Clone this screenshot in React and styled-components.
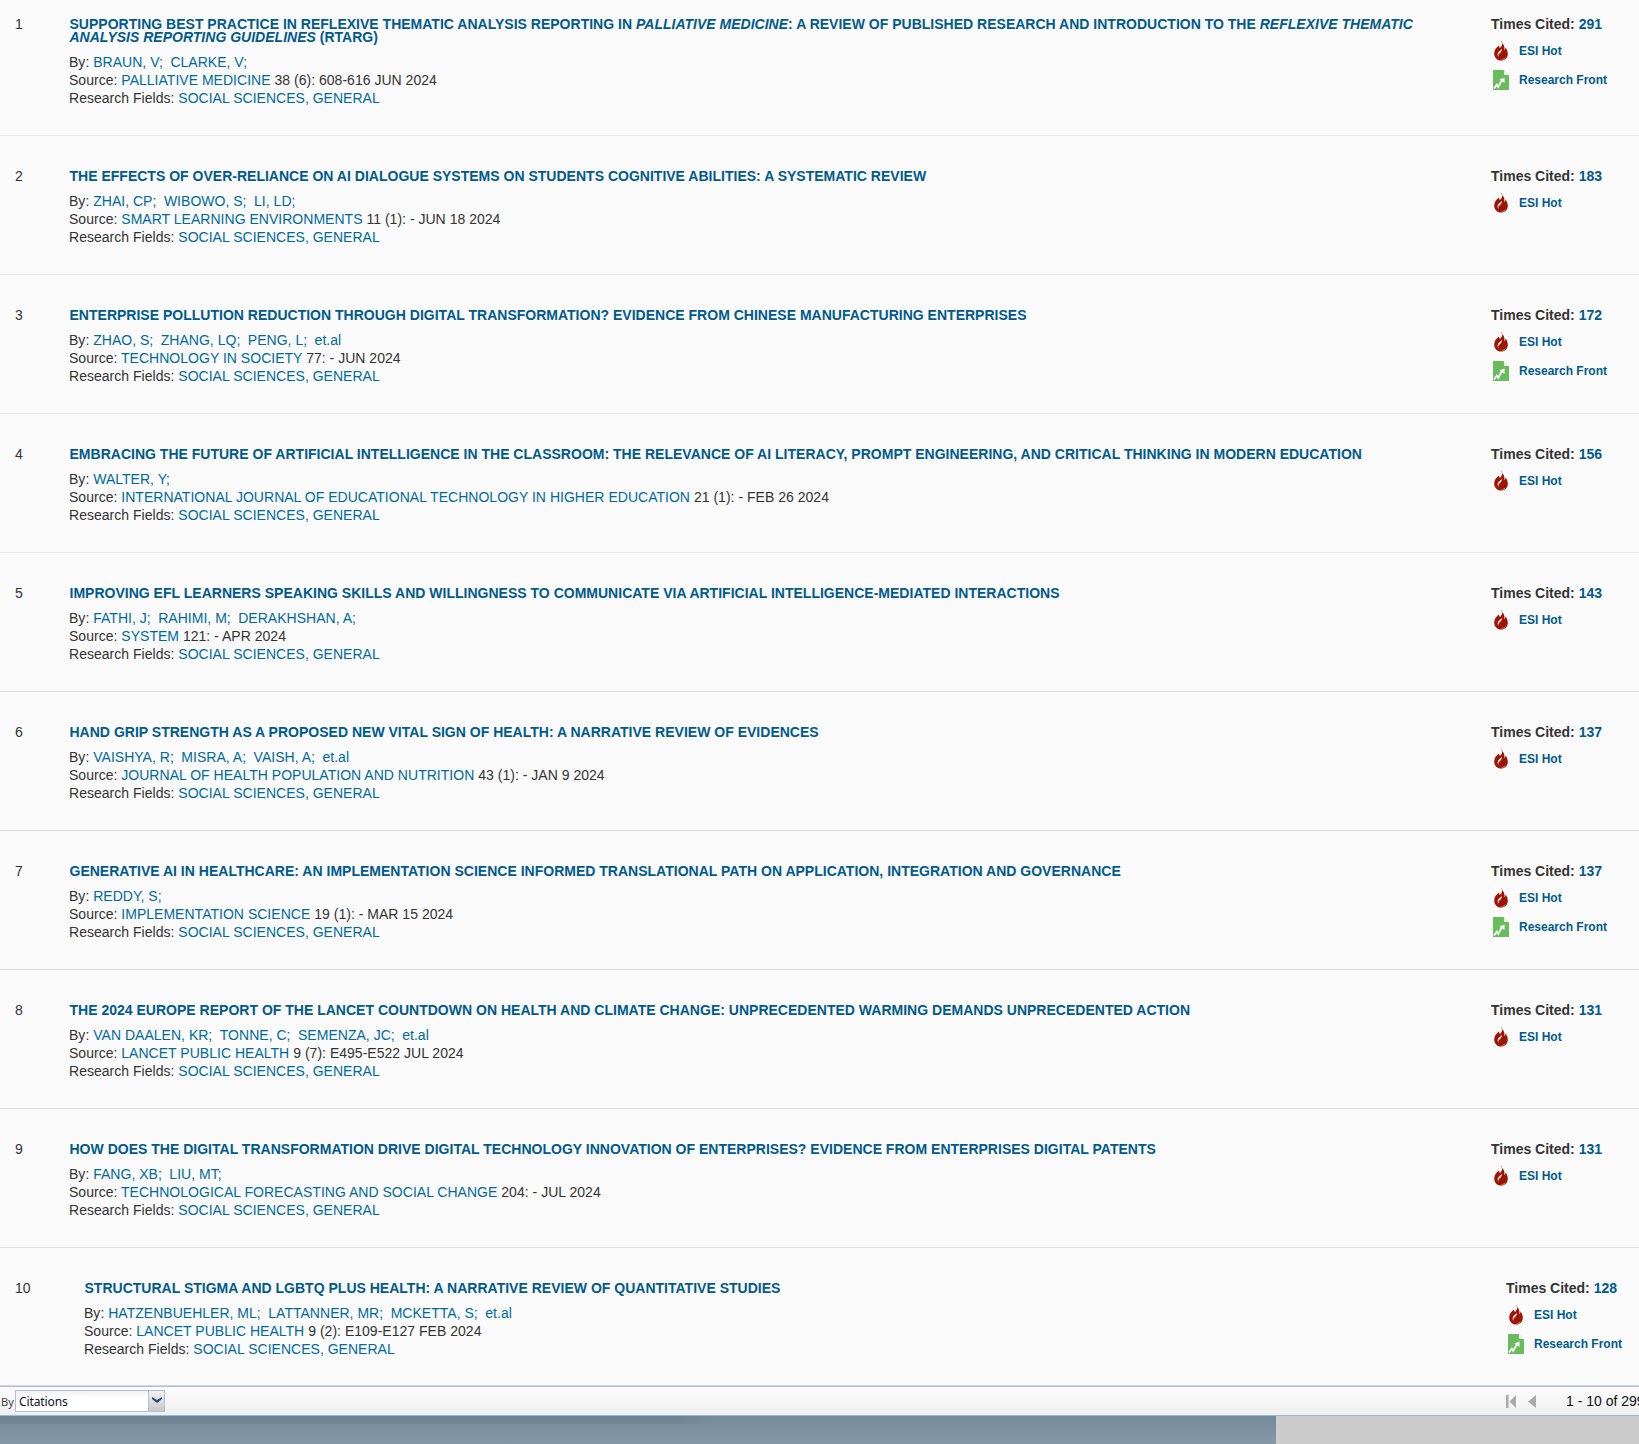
import React from 'react';
import styled, { createGlobalStyle } from 'styled-components';

const GlobalStyle = createGlobalStyle`
  html, body {
    margin: 0;
    padding: 0;
    height: 1444px;
    overflow: hidden;
    background: #fafafa;
  }
  body {
    font-family: "Liberation Sans", Arial, sans-serif;
  }
`;

const Page = styled.div`
  width: 1639px;
  height: 1444px;
  display: flex;
  flex-direction: column;
  overflow: hidden;
`;

const List = styled.div`
  height: 1386px;
  flex: none;
`;

const Row = styled.div`
  display: flex;
  height: ${(p) => p.$height}px;
  box-sizing: border-box;
  padding-top: ${(p) => p.$top}px;
  border-bottom: ${(p) => (p.$last ? 'none' : `1px solid ${p.$dark ? '#dedede' : '#ececec'}`)};
`;

const Rank = styled.div`
  flex: none;
  width: ${(p) => (p.$wide ? 84 : 69)}px;
  margin-top: -1px;
  padding-left: 15px;
  box-sizing: border-box;
  font-size: 14px;
  line-height: 14px;
  color: #333;
`;

const Main = styled.div`
  flex: none;
  width: 1422px;
`;

const Title = styled.a`
  display: block;
  max-width: 1380px;
  padding-left: 0.5px;
  font-size: 14px;
  line-height: 13px;
  font-weight: bold;
  letter-spacing: 0.01px;
  color: #005a8c;
  margin-bottom: 9px;
  em { font-style: italic; }
`;

const Meta = styled.div`
  font-size: 14px;
  line-height: 18px;
  letter-spacing: 0.02px;
  color: #333;
`;

const MetaLink = styled.a`
  color: #006a9c;
  margin-right: ${(p) => (p.$author ? 7.5 : 0)}px;
`;

const Side = styled.div`
  flex: none;
  width: 148px;
  margin-top: -1px;
`;

const Cited = styled.div`
  font-size: 14px;
  line-height: 14px;
  font-weight: bold;
  color: #333;
  margin-bottom: 12px;
  span { color: #005a8c; }
`;

const Badge = styled.div`
  display: flex;
  align-items: flex-start;
  height: 29px;
  padding-left: 2px;
  font-size: 12px;
  line-height: 16px;
  font-weight: bold;
  color: #005a8c;
`;

const BadgeIcon = styled.svg`
  flex: none;
  width: 16px;
  height: 22px;
  margin-right: 10px;
  margin-top: -3px;
`;

const Toolbar = styled.div`
  flex: none;
  height: 30px;
  box-sizing: border-box;
  display: flex;
  align-items: center;
  border-top: 1px solid #a4bfe6;
  border-bottom: 1px solid #98b9e6;
  background: linear-gradient(#fcfcfc, #efefef);
  box-shadow: 0 -1px 0 #d6d6d6;
  white-space: nowrap;
`;

const ByLabel = styled.span`
  font-family: "Noto Sans", sans-serif;
  font-size: 11px;
  color: #444;
  margin-left: 1px;
  width: 14px;
`;

const Select = styled.div`
  width: 150px;
  height: 22px;
  box-sizing: border-box;
  display: flex;
  border: 1px solid #b4bccf;
  background: linear-gradient(#f2f2f6, #fff 35%);
`;

const SelectText = styled.div`
  flex: 1;
  font-family: "Noto Sans", sans-serif;
  font-size: 12px;
  letter-spacing: -0.1px;
  line-height: 22px;
  padding-left: 3px;
  color: #0a1230;
`;

const SelectArrow = styled.div`
  width: 16px;
  border-left: 1px solid #b4bccf;
  background: linear-gradient(#f2f2f2, #c8c8c8);
  display: flex;
  justify-content: center;
  padding-top: 6px;
  box-sizing: border-box;
`;

const Pager = styled.div`
  margin-left: auto;
  display: flex;
  align-items: center;
  flex: none;
  width: 133px;
  overflow: hidden;
  font-size: 14px;
  color: #111;
`;

const PagerIcon = styled.svg`
  flex: none;
  margin-right: ${(p) => p.$gap}px;
`;

const Footer = styled.div`
  flex: 1;
  display: flex;
`;

const FooterBlue = styled.div`
  width: 1276px;
  background:
    linear-gradient(90deg, rgba(100, 118, 130, 0.35) 0, rgba(100, 118, 130, 0.35) 680px, rgba(100, 118, 130, 0) 705px) top / 100% 8px no-repeat,
    linear-gradient(#74899a, #8598a8);
`;

const FooterGrey = styled.div`
  flex: 1;
  background: #cccccc;
`;

const rows = [
  {
    title: (
      <>
        SUPPORTING BEST PRACTICE IN REFLEXIVE THEMATIC ANALYSIS REPORTING IN <em>PALLIATIVE MEDICINE</em>: A REVIEW OF PUBLISHED RESEARCH AND INTRODUCTION TO THE <em>REFLEXIVE THEMATIC ANALYSIS REPORTING GUIDELINES</em> (RTARG)
      </>
    ),
    authors: ['BRAUN, V;', 'CLARKE, V;'],
    journal: 'PALLIATIVE MEDICINE',
    source: '38 (6): 608-616 JUN 2024',
    cited: 291,
    front: true,
  },
  {
    title: 'THE EFFECTS OF OVER-RELIANCE ON AI DIALOGUE SYSTEMS ON STUDENTS COGNITIVE ABILITIES: A SYSTEMATIC REVIEW',
    authors: ['ZHAI, CP;', 'WIBOWO, S;', 'LI, LD;'],
    journal: 'SMART LEARNING ENVIRONMENTS',
    source: '11 (1): - JUN 18 2024',
    cited: 183,
  },
  {
    title: 'ENTERPRISE POLLUTION REDUCTION THROUGH DIGITAL TRANSFORMATION? EVIDENCE FROM CHINESE MANUFACTURING ENTERPRISES',
    authors: ['ZHAO, S;', 'ZHANG, LQ;', 'PENG, L;', 'et.al'],
    journal: 'TECHNOLOGY IN SOCIETY',
    source: '77: - JUN 2024',
    cited: 172,
    front: true,
  },
  {
    title: 'EMBRACING THE FUTURE OF ARTIFICIAL INTELLIGENCE IN THE CLASSROOM: THE RELEVANCE OF AI LITERACY, PROMPT ENGINEERING, AND CRITICAL THINKING IN MODERN EDUCATION',
    authors: ['WALTER, Y;'],
    journal: 'INTERNATIONAL JOURNAL OF EDUCATIONAL TECHNOLOGY IN HIGHER EDUCATION',
    source: '21 (1): - FEB 26 2024',
    cited: 156,
  },
  {
    title: 'IMPROVING EFL LEARNERS SPEAKING SKILLS AND WILLINGNESS TO COMMUNICATE VIA ARTIFICIAL INTELLIGENCE-MEDIATED INTERACTIONS',
    authors: ['FATHI, J;', 'RAHIMI, M;', 'DERAKHSHAN, A;'],
    journal: 'SYSTEM',
    source: '121: - APR 2024',
    cited: 143,
  },
  {
    title: 'HAND GRIP STRENGTH AS A PROPOSED NEW VITAL SIGN OF HEALTH: A NARRATIVE REVIEW OF EVIDENCES',
    authors: ['VAISHYA, R;', 'MISRA, A;', 'VAISH, A;', 'et.al'],
    journal: 'JOURNAL OF HEALTH POPULATION AND NUTRITION',
    source: '43 (1): - JAN 9 2024',
    cited: 137,
  },
  {
    title: 'GENERATIVE AI IN HEALTHCARE: AN IMPLEMENTATION SCIENCE INFORMED TRANSLATIONAL PATH ON APPLICATION, INTEGRATION AND GOVERNANCE',
    authors: ['REDDY, S;'],
    journal: 'IMPLEMENTATION SCIENCE',
    source: '19 (1): - MAR 15 2024',
    cited: 137,
    front: true,
  },
  {
    title: 'THE 2024 EUROPE REPORT OF THE LANCET COUNTDOWN ON HEALTH AND CLIMATE CHANGE: UNPRECEDENTED WARMING DEMANDS UNPRECEDENTED ACTION',
    authors: ['VAN DAALEN, KR;', 'TONNE, C;', 'SEMENZA, JC;', 'et.al'],
    journal: 'LANCET PUBLIC HEALTH',
    source: '9 (7): E495-E522 JUL 2024',
    cited: 131,
  },
  {
    title: 'HOW DOES THE DIGITAL TRANSFORMATION DRIVE DIGITAL TECHNOLOGY INNOVATION OF ENTERPRISES? EVIDENCE FROM ENTERPRISES DIGITAL PATENTS',
    authors: ['FANG, XB;', 'LIU, MT;'],
    journal: 'TECHNOLOGICAL FORECASTING AND SOCIAL CHANGE',
    source: '204: - JUL 2024',
    cited: 131,
  },
  {
    title: 'STRUCTURAL STIGMA AND LGBTQ PLUS HEALTH: A NARRATIVE REVIEW OF QUANTITATIVE STUDIES',
    authors: ['HATZENBUEHLER, ML;', 'LATTANNER, MR;', 'MCKETTA, S;', 'et.al'],
    journal: 'LANCET PUBLIC HEALTH',
    source: '9 (2): E109-E127 FEB 2024',
    cited: 128,
    front: true,
  },
];

function Flame() {
  return (
    <BadgeIcon viewBox="0 0 16 22">
      <path fill="#9c1606" d="M9 1.500c1 2.600-.3 4.500-2 6.500-.7-.6-1-1.400-1-2.500C3 7.500 1.200 10.300 1.200 13.500c0 4.300 3 7 6.800 7 3.900 0 6.800-2.800 6.800-6.800 0-2.400-.9-4.600-2.300-6.200 0 1.200-.3 2.200-1 2.800.3-3.300-.7-6.500-3.500-8.800z" />
      <path fill="#fafafa" d="M8.800 8.500c.4 2.400-1 3.800-2.600 5.300-1 1-1.200 2.300-.6 3.400C4.500 16 4.300 14 5.300 12.500c1-1.500 3-2.300 3.500-4z" />
      <path fill="#dd9a90" d="M7 20c2.600.5 5-.8 6.300-3.500-1.300 1.600-3.300 2.900-6.300 3.500z" />
    </BadgeIcon>
  );
}

function FrontIcon() {
  return (
    <BadgeIcon viewBox="0 0 16 22">
      <path fill="#6abb5e" d="M0 1h10.500L16 6.500V21H0z" />
      <path fill="#e6f3e2" d="M11 1l5 5h-5z" />
      <path fill="none" stroke="#fff" strokeWidth="1.700" d="M1 19.500l2.800-4 1.400 2.500 3.800-7" />
      <path fill="#fff" d="M6.500 10.500l5-2v5.500z" />
    </BadgeIcon>
  );
}

function Entry({ item, index }) {
  const shifted = index === 9;
  const top = index === 0 ? 18 : 34;
  return (
    <Row $height={index === 0 ? 136 : 139} $top={top} $last={shifted} $dark={index >= 4}>
      <Rank $wide={shifted}>{index + 1}</Rank>
      <Main>
        <Title>{item.title}</Title>
        <Meta>
          By: {item.authors.map((a) => (
            <MetaLink key={a} $author>{a}</MetaLink>
          ))}
        </Meta>
        <Meta>
          Source: <MetaLink>{item.journal}</MetaLink> {item.source}
        </Meta>
        <Meta>
          Research Fields: <MetaLink>SOCIAL SCIENCES, GENERAL</MetaLink>
        </Meta>
      </Main>
      <Side>
        <Cited>
          Times Cited: <span>{item.cited}</span>
        </Cited>
        <Badge>
          <Flame />
          ESI Hot
        </Badge>
        {item.front && (
          <Badge>
            <FrontIcon />
            Research Front
          </Badge>
        )}
      </Side>
    </Row>
  );
}

export default function App() {
  return (
    <Page>
      <GlobalStyle />
      <List>
        {rows.map((item, i) => (
          <Entry key={i} item={item} index={i} />
        ))}
      </List>
      <Toolbar>
        <ByLabel>By</ByLabel>
        <Select>
          <SelectText>Citations</SelectText>
          <SelectArrow>
            <svg width="10" height="6" viewBox="0 0 10 6">
              <path fill="#2d4478" d="M0 0l5 3 5-3v2L5 6 0 2z" />
            </svg>
          </SelectArrow>
        </Select>
        <Pager>
          <PagerIcon $gap={12} width="10" height="13" viewBox="0 0 10 13">
            <path fill="#aaa" d="M0 0h2.500v13H0zM10 0v13L3.500 6.500z" />
          </PagerIcon>
          <PagerIcon $gap={30} width="8" height="13" viewBox="0 0 8 13">
            <path fill="#aaa" d="M8 0v13L0 6.500z" />
          </PagerIcon>
          <span>1 - 10 of 299</span>
        </Pager>
      </Toolbar>
      <Footer>
        <FooterBlue />
        <FooterGrey />
      </Footer>
    </Page>
  );
}
